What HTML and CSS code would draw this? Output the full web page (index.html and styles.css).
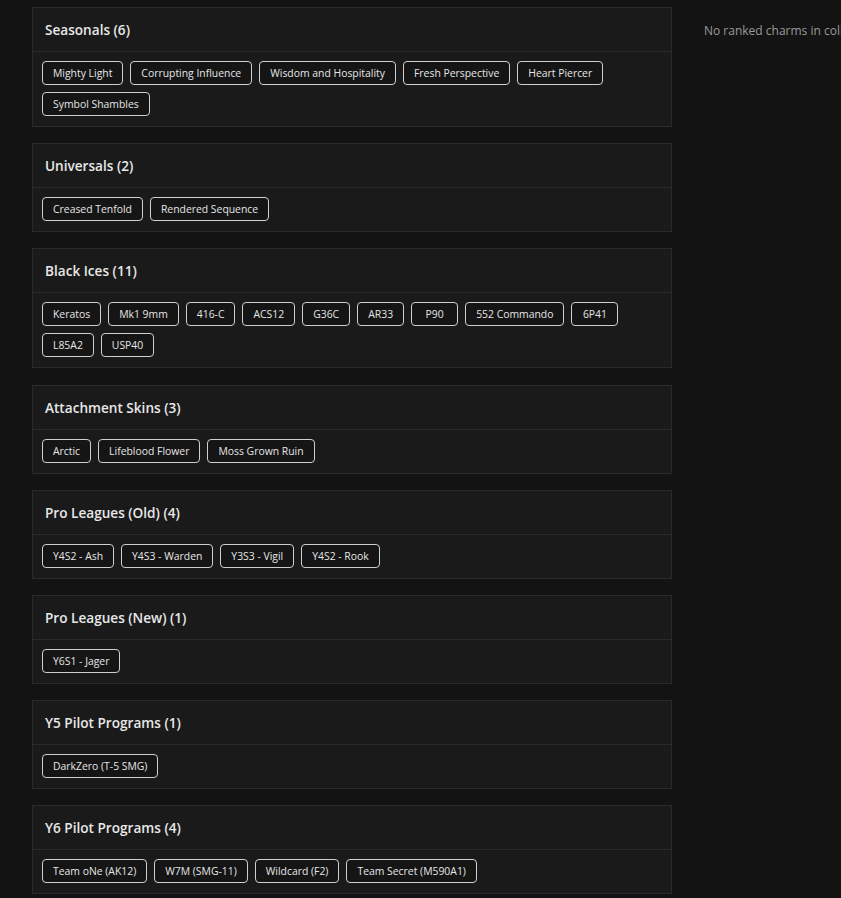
FILE: index.html
```html
<!DOCTYPE html>
<html lang="en">
<head>
<meta charset="utf-8">
<title>Charms</title>
<link rel="stylesheet" href="styles.css">
</head>
<body>
<div class="layout">
  <main class="col-main">
    <section class="card">
      <header class="card-head">Seasonals (6)</header>
      <div class="chips">
        <span class="chip">Mighty Light</span>
        <span class="chip">Corrupting Influence</span>
        <span class="chip">Wisdom and Hospitality</span>
        <span class="chip">Fresh Perspective</span>
        <span class="chip">Heart Piercer</span>
        <span class="chip">Symbol Shambles</span>
      </div>
    </section>
    <section class="card">
      <header class="card-head">Universals (2)</header>
      <div class="chips">
        <span class="chip">Creased Tenfold</span>
        <span class="chip">Rendered Sequence</span>
      </div>
    </section>
    <section class="card">
      <header class="card-head">Black Ices (11)</header>
      <div class="chips">
        <span class="chip">Keratos</span>
        <span class="chip">Mk1 9mm</span>
        <span class="chip">416-C</span>
        <span class="chip">ACS12</span>
        <span class="chip">G36C</span>
        <span class="chip">AR33</span>
        <span class="chip">P90</span>
        <span class="chip">552 Commando</span>
        <span class="chip">6P41</span>
        <span class="chip">L85A2</span>
        <span class="chip">USP40</span>
      </div>
    </section>
    <section class="card">
      <header class="card-head">Attachment Skins (3)</header>
      <div class="chips">
        <span class="chip">Arctic</span>
        <span class="chip">Lifeblood Flower</span>
        <span class="chip">Moss Grown Ruin</span>
      </div>
    </section>
    <section class="card">
      <header class="card-head">Pro Leagues (Old) (4)</header>
      <div class="chips">
        <span class="chip">Y4S2 - Ash</span>
        <span class="chip">Y4S3 - Warden</span>
        <span class="chip">Y3S3 - Vigil</span>
        <span class="chip">Y4S2 - Rook</span>
      </div>
    </section>
    <section class="card">
      <header class="card-head">Pro Leagues (New) (1)</header>
      <div class="chips">
        <span class="chip">Y6S1 - Jager</span>
      </div>
    </section>
    <section class="card">
      <header class="card-head">Y5 Pilot Programs (1)</header>
      <div class="chips">
        <span class="chip">DarkZero (T-5 SMG)</span>
      </div>
    </section>
    <section class="card">
      <header class="card-head">Y6 Pilot Programs (4)</header>
      <div class="chips">
        <span class="chip">Team oNe (AK12)</span>
        <span class="chip">W7M (SMG-11)</span>
        <span class="chip">Wildcard (F2)</span>
        <span class="chip">Team Secret (M590A1)</span>
      </div>
    </section>
  </main>
  <aside class="col-side">
    <p class="empty">No ranked charms in collection</p>
  </aside>
</div>
</body>
</html>
```

FILE: styles.css
```css
html, body {
  margin: 0;
  padding: 0;
  background: #131313;
  overflow: hidden;
}

body {
  font-family: "Open Sans", "Liberation Sans", sans-serif;
  color: #e6e6e6;
}

.layout {
  display: flex;
  align-items: flex-start;
  gap: 16px;
  padding: 7px 0 0 32px;
  width: 1200px;
}

.col-main {
  width: 640px;
  flex: none;
  display: flex;
  flex-direction: column;
  gap: 16.2px;
}

.card {
  background: #1a1a1a;
  border: 1px solid #2a2a2a;
}

.card-head {
  height: 43px;
  display: flex;
  align-items: center;
  padding: 0 12px;
  border-bottom: 1px solid #2a2a2a;
  font-size: 13.6px;
  font-weight: 600;
  color: #e8e8e8;
}

.chips {
  display: flex;
  flex-wrap: wrap;
  gap: 7px 7px;
  padding: 9px 9px 10px;
}

.chip {
  box-sizing: border-box;
  display: inline-block;
  min-width: 47px;
  text-align: center;
  font-size: 10.4px;
  line-height: 16px;
  padding: 3px 10px;
  border: 1px solid #cfcfcf;
  border-radius: 4px;
  background: #151515;
  color: #e6e6e6;
  white-space: nowrap;
}

.col-side {
  padding: 16px 16px;
}

.empty {
  margin: 0;
  font-size: 12px;
  line-height: 16px;
  color: #9a9a9a;
  white-space: nowrap;
}
```
